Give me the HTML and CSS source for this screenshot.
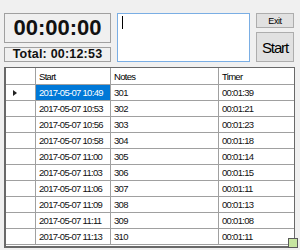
FILE: index.html
```html
<!DOCTYPE html>
<html lang="en">
<head>
  <meta charset="UTF-8">
  <title>Timer</title>
  <link rel="stylesheet" href="styles.css">
</head>
<body>
  <div class="window">
    <div class="top">
      <div class="clock">
        <div class="clock-time">00:00:00</div>
        <div class="clock-total">Total: 00:12:53</div>
      </div>
      <div class="notes-box"><span class="caret"></span></div>
      <div class="buttons">
        <button class="btn btn-exit">Exit</button>
        <button class="btn btn-start">Start</button>
      </div>
    </div>

    <div class="grid">
      <table>
        <thead>
          <tr>
            <th class="rowhead"></th>
            <th class="col-start">Start</th>
            <th class="col-notes">Notes</th>
            <th class="col-timer">Timer</th>
          </tr>
        </thead>
        <tbody>
          <tr><td class="rowhead"><span class="pointer"></span></td><td class="selected">2017-05-07 10:49</td><td>301</td><td>00:01:39</td></tr>
          <tr><td class="rowhead"></td><td>2017-05-07 10:53</td><td>302</td><td>00:01:21</td></tr>
          <tr><td class="rowhead"></td><td>2017-05-07 10:56</td><td>303</td><td>00:01:23</td></tr>
          <tr><td class="rowhead"></td><td>2017-05-07 10:58</td><td>304</td><td>00:01:18</td></tr>
          <tr><td class="rowhead"></td><td>2017-05-07 11:00</td><td>305</td><td>00:01:14</td></tr>
          <tr><td class="rowhead"></td><td>2017-05-07 11:03</td><td>306</td><td>00:01:15</td></tr>
          <tr><td class="rowhead"></td><td>2017-05-07 11:06</td><td>307</td><td>00:01:11</td></tr>
          <tr><td class="rowhead"></td><td>2017-05-07 11:09</td><td>308</td><td>00:01:13</td></tr>
          <tr><td class="rowhead"></td><td>2017-05-07 11:11</td><td>309</td><td>00:01:08</td></tr>
          <tr><td class="rowhead"></td><td>2017-05-07 11:13</td><td>310</td><td>00:01:11</td></tr>
        </tbody>
      </table>
      <span class="grip"></span>
    </div>
  </div>
</body>
</html>
```

FILE: styles.css
```css
:root {
  --color-bg: #f0f0f0;
  --color-line: #a0a0a0;
  --color-dark: #696969;
  --color-select: #0078d7;
  --color-text: #111;
}

body {
  margin: 0;
  background-color: var(--color-bg);
  font-family: "Liberation Sans", Arial, sans-serif;
  color: var(--color-text);
}

.window {
  width: 300px;
  height: 250px;
  padding: 13px 5px 0 4px;
  box-sizing: border-box;
}

.top {
  display: flex;
  height: 49px;
}

.clock {
  width: 107px;
  display: flex;
  flex-direction: column;
  gap: 4px;
}

.clock-time,
.clock-total {
  box-sizing: border-box;
  border: 1px solid var(--color-line);
  font-weight: bold;
  text-align: center;
}

.clock-time {
  height: 30px;
  line-height: 28px;
  font-size: 22px;
}

.clock-total {
  height: 15px;
  line-height: 13px;
  font-size: 12.5px;
  letter-spacing: 0.2px;
}

.notes-box {
  width: 133px;
  margin-left: 6px;
  box-sizing: border-box;
  border: 1px solid #7aaee4;
  background: #fff;
  padding: 2px 4px;
}

.caret {
  display: block;
  width: 1px;
  height: 13px;
  background: #000;
}

.buttons {
  width: 38px;
  margin-left: 6px;
  display: flex;
  flex-direction: column;
  gap: 4px;
}

.btn {
  margin: 0;
  padding: 0;
  box-sizing: border-box;
  border: 1px solid #adadad;
  background: #e1e1e1;
  font-family: "Liberation Sans", Arial, sans-serif;
  color: #000;
}

.btn-exit {
  height: 15px;
  font-size: 9px;
  letter-spacing: -0.4px;
}

.btn-start {
  height: 30px;
  font-size: 15px;
  letter-spacing: -1.1px;
}

.grid {
  position: relative;
  margin-top: 5px;
  width: 291px;
  height: 181px;
  box-sizing: border-box;
  border: 1px solid var(--color-dark);
  border-left-width: 2px;
  border-bottom-width: 2px;
  background: #fff;
}

table {
  width: 100%;
  border-collapse: collapse;
  table-layout: fixed;
  font-size: 9.5px;
  letter-spacing: -0.7px;
}

th,
td {
  padding: 0 0 0 3px;
  text-align: left;
  white-space: nowrap;
  border: 1px solid var(--color-line);
  height: 15px;
  font-weight: normal;
}

th {
  height: 16px;
  border-top: none;
  color: #000;
}

tr > :first-child {
  border-left: none;
}

tr > :last-child {
  border-right: none;
}

.rowhead {
  width: 29px;
  padding: 0;
}

.col-start {
  width: 71px;
}

.col-notes {
  width: 104px;
}

td.selected {
  background: var(--color-select);
  color: #fff;
}

.pointer {
  display: block;
  margin-left: 7px;
  width: 0;
  height: 0;
  border-top: 3px solid transparent;
  border-bottom: 3px solid transparent;
  border-left: 4px solid #222;
}

.grip {
  position: absolute;
  right: -4px;
  bottom: -2px;
  width: 8px;
  height: 8px;
  background: #c6e5a0;
  border: 1px solid #5a5a5a;
}
```
